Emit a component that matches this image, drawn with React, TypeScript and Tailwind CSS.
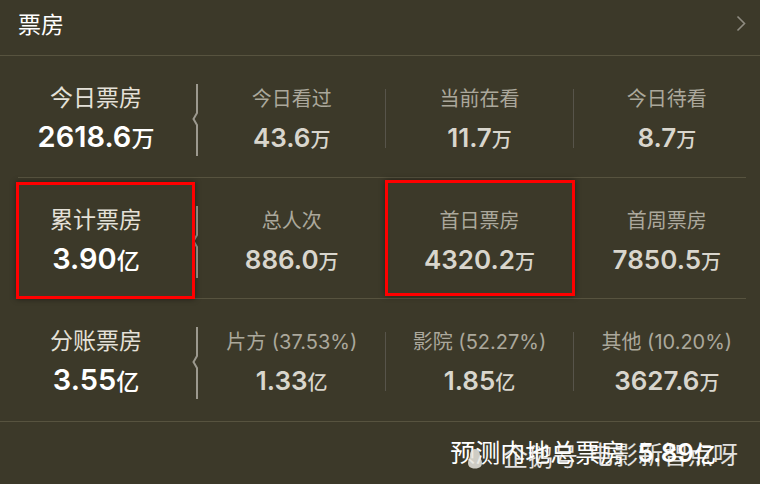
import * as React from "react";

type Stat = {
  label: string;
  value: string;
  unit: string;
};

type RowData = {
  left: Stat;
  cols: Stat[];
  height: string;
};

const rows: RowData[] = [
  {
    left: { label: "今日票房", value: "2618.6", unit: "万" },
    cols: [
      { label: "今日看过", value: "43.6", unit: "万" },
      { label: "当前在看", value: "11.7", unit: "万" },
      { label: "今日待看", value: "8.7", unit: "万" },
    ],
    height: "h-[121px]",
  },
  {
    left: { label: "累计票房", value: "3.90", unit: "亿" },
    cols: [
      { label: "总人次", value: "886.0", unit: "万" },
      { label: "首日票房", value: "4320.2", unit: "万" },
      { label: "首周票房", value: "7850.5", unit: "万" },
    ],
    height: "h-[120px]",
  },
  {
    left: { label: "分账票房", value: "3.55", unit: "亿" },
    cols: [
      { label: "片方 (37.53%)", value: "1.33", unit: "亿" },
      { label: "影院 (52.27%)", value: "1.85", unit: "亿" },
      { label: "其他 (10.20%)", value: "3627.6", unit: "万" },
    ],
    height: "h-[122px]",
  },
];

const Brace = () => (
  <svg
    width="6"
    height="72"
    viewBox="0 0 6 72"
    className="mt-[28px] shrink-0 self-start"
    aria-hidden="true"
  >
    <path
      d="M5 0 V29 L1.5 35 L5 41 V72"
      fill="none"
      stroke="#9c998e"
      strokeWidth="2"
    />
  </svg>
);

const StatRow = ({ row }: { row: RowData }) => (
  <div className={`flex ${row.height}`}>
    <div className="flex w-[192px] shrink-0 flex-col items-center pt-[30px]">
      <div className="text-[23px] leading-[24px] text-[#e4e1d8]">
        {row.left.label}
      </div>
      <div className="mt-[11px] text-[29px] font-semibold leading-[32px] text-white">
        {row.left.value}
        <span className="text-[23px] font-medium">{row.left.unit}</span>
      </div>
    </div>

    <Brace />

    {row.cols.map((col, i) => (
      <div key={col.label} className="flex flex-1">
        {i > 0 && <div className="mt-[33px] h-[59px] w-px bg-[#57544a]" />}
        <div className="flex flex-1 flex-col items-center pt-[31px]">
          <div className="text-[20px] leading-[24px] text-[#aba89c]">
            {col.label}
          </div>
          <div className="mt-[11px] text-[26px] font-semibold leading-[32px] text-[#d9d6cd]">
            {col.value}
            <span className="text-[20px] font-medium">{col.unit}</span>
          </div>
        </div>
      </div>
    ))}
  </div>
);

export default function App() {
  return (
    <div className="relative h-[484px] w-[760px] overflow-hidden bg-[#3c3929] font-['Inter','Noto_Sans_CJK_SC',sans-serif]">
      <header className="flex h-[55px] items-center justify-between pb-[4px] pl-[18px] pr-[14px]">
        <span className="text-[23px] leading-none text-white">票房</span>
        <svg width="10" height="17" viewBox="0 0 10 17" className="mb-[5px]" aria-hidden="true">
          <path
            d="M1.5 1.5 L8.5 8.5 L1.5 15.5"
            fill="none"
            stroke="#8f8c81"
            strokeWidth="1.6"
          />
        </svg>
      </header>
      <div className="h-px bg-[#57533f]" />

      <StatRow row={rows[0]} />
      <div className="ml-[18px] mr-[14px] h-px bg-[#57533f]" />
      <StatRow row={rows[1]} />
      <div className="ml-[18px] mr-[14px] h-px bg-[#57533f]" />
      <StatRow row={rows[2]} />
      <div className="h-px bg-[#57533f]" />

      <footer className="flex h-[62px] items-center justify-end pr-[44px] text-white">
        <span className="text-[25px] leading-none">预测内地总票房</span>
        <span className="ml-[12px] text-[26px] font-semibold leading-none">
          5.89<span className="text-[22px] font-medium">亿</span>
        </span>
      </footer>

      {/* watermark over the footer */}
      <div className="pointer-events-none absolute left-[467px] top-[441px] flex items-center text-[25px] leading-none text-white/85">
        <svg width="16" height="22" viewBox="0 0 16 22" className="mr-[20px] mt-[6px]" aria-hidden="true">
          <path
            d="M8 1 C4 1 3 4.5 3 7.5 C3 9.5 1 12 1 15 C1 18 3 20.5 8 20.5 C13 20.5 15 18 15 15 C15 12 13 9.5 13 7.5 C13 4.5 12 1 8 1 Z"
            fill="#e8e6df"
            fillOpacity="0.85"
          />
        </svg>
        <span className="mt-[4px]">企鹅号</span>
        <span className="ml-[10px]">电影新智点呀</span>
      </div>

      {/* highlight boxes */}
      <div className="pointer-events-none absolute left-[16px] top-[182px] h-[117px] w-[179px] border-[3px] border-[#ff0000] shadow-[0_0_6px_rgba(0,0,0,0.45)]" />
      <div className="pointer-events-none absolute left-[385px] top-[180px] h-[116px] w-[190px] border-[3px] border-[#ff0000] shadow-[0_0_6px_rgba(0,0,0,0.45)]" />
    </div>
  );
}
